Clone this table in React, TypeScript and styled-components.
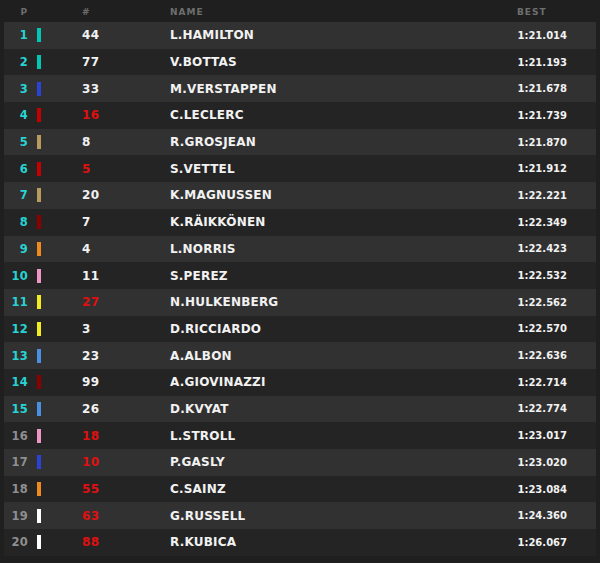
import React from 'react';
import styled, { createGlobalStyle } from 'styled-components';

const GlobalStyle = createGlobalStyle`
  html, body {
    margin: 0;
    padding: 0;
    background: #1f1f1f;
  }
  body {
    font-family: 'DejaVu Sans', 'Liberation Sans', sans-serif;
    -webkit-font-smoothing: antialiased;
  }
`;

const teamColors: Record<string, string> = {
  mercedes: '#00c8b4',
  redbull: '#2a42d8',
  ferrari: '#c40000',
  haas: '#b99a5e',
  alfa: '#8c0000',
  mclaren: '#f08a1c',
  racingpoint: '#f096c6',
  renault: '#f5ec20',
  tororosso: '#4a90e2',
  williams: '#ffffff',
};

type Driver = {
  num: number;
  name: string;
  best: string;
  team: string;
  redNum?: boolean;
};

const drivers: Driver[] = [
  { num: 44, name: 'L.HAMILTON', best: '1:21.014', team: 'mercedes' },
  { num: 77, name: 'V.BOTTAS', best: '1:21.193', team: 'mercedes' },
  { num: 33, name: 'M.VERSTAPPEN', best: '1:21.678', team: 'redbull' },
  { num: 16, name: 'C.LECLERC', best: '1:21.739', team: 'ferrari', redNum: true },
  { num: 8, name: 'R.GROSJEAN', best: '1:21.870', team: 'haas' },
  { num: 5, name: 'S.VETTEL', best: '1:21.912', team: 'ferrari', redNum: true },
  { num: 20, name: 'K.MAGNUSSEN', best: '1:22.221', team: 'haas' },
  { num: 7, name: 'K.RÄIKKÖNEN', best: '1:22.349', team: 'alfa' },
  { num: 4, name: 'L.NORRIS', best: '1:22.423', team: 'mclaren' },
  { num: 11, name: 'S.PEREZ', best: '1:22.532', team: 'racingpoint' },
  { num: 27, name: 'N.HULKENBERG', best: '1:22.562', team: 'renault', redNum: true },
  { num: 3, name: 'D.RICCIARDO', best: '1:22.570', team: 'renault' },
  { num: 23, name: 'A.ALBON', best: '1:22.636', team: 'tororosso' },
  { num: 99, name: 'A.GIOVINAZZI', best: '1:22.714', team: 'alfa' },
  { num: 26, name: 'D.KVYAT', best: '1:22.774', team: 'tororosso' },
  { num: 18, name: 'L.STROLL', best: '1:23.017', team: 'racingpoint', redNum: true },
  { num: 10, name: 'P.GASLY', best: '1:23.020', team: 'redbull', redNum: true },
  { num: 55, name: 'C.SAINZ', best: '1:23.084', team: 'mclaren', redNum: true },
  { num: 63, name: 'G.RUSSELL', best: '1:24.360', team: 'williams', redNum: true },
  { num: 88, name: 'R.KUBICA', best: '1:26.067', team: 'williams', redNum: true },
];

const Board = styled.div`
  width: 600px;
  height: 563px;
  background: #1f1f1f;
  padding: 0 4px;
  box-sizing: border-box;
  overflow: hidden;
`;

const cols = `
  display: grid;
  grid-template-columns: 24px 9px 4px 41px 88px 1fr 50px 29px;
  grid-template-rows: 100%;
  align-items: center;
`;

const HeaderRow = styled.div`
  ${cols}
  height: 22px;
  color: #6e6e6e;
  font-size: 9px;
  font-weight: bold;
  letter-spacing: 1px;
`;

const HeaderCell = styled.span<{ $col: number; $right?: boolean }>`
  grid-column: ${(p) => p.$col};
  grid-row: 1;
  text-align: ${(p) => (p.$right ? 'right' : 'left')};
  white-space: nowrap;
  padding-top: 1px;
`;

const Row = styled.div<{ $odd: boolean }>`
  ${cols}
  height: 26.7px;
  background: ${(p) => (p.$odd ? '#313131' : '#242424')};
`;

const Pos = styled.span<{ $top: boolean }>`
  grid-column: 1;
  grid-row: 1;
  text-align: right;
  font-size: 11.5px;
  font-weight: bold;
  letter-spacing: 0.3px;
  color: ${(p) => (p.$top ? '#27d3d3' : '#8f8f8f')};
`;

const TeamBar = styled.span<{ $color: string }>`
  grid-column: 3;
  grid-row: 1;
  width: 4px;
  height: 14px;
  background: ${(p) => p.$color};
`;

const CarNum = styled.span<{ $red?: boolean }>`
  grid-column: 5;
  grid-row: 1;
  font-size: 12px;
  font-weight: bold;
  letter-spacing: 0.5px;
  color: ${(p) => (p.$red ? '#e01010' : '#f2f2f2')};
`;

const Name = styled.span`
  grid-column: 6;
  grid-row: 1;
  font-size: 12px;
  font-weight: bold;
  letter-spacing: 0.2px;
  color: #f2f2f2;
  white-space: nowrap;
`;

const Best = styled.span`
  grid-column: 7;
  grid-row: 1;
  justify-self: end;
  font-size: 10px;
  font-weight: bold;
  color: #f2f2f2;
  white-space: nowrap;
`;

const App: React.FC = () => (
  <>
    <GlobalStyle />
    <Board>
      <HeaderRow>
        <HeaderCell $col={1} $right>P</HeaderCell>
        <HeaderCell $col={5}>#</HeaderCell>
        <HeaderCell $col={6}>NAME</HeaderCell>
        <HeaderCell $col={7}>BEST</HeaderCell>
      </HeaderRow>
      {drivers.map((d, i) => (
        <Row key={d.num} $odd={i % 2 === 0}>
          <Pos $top={i < 15}>{i + 1}</Pos>
          <TeamBar $color={teamColors[d.team]} />
          <CarNum $red={d.redNum}>{d.num}</CarNum>
          <Name>{d.name}</Name>
          <Best>{d.best}</Best>
        </Row>
      ))}
    </Board>
  </>
);

export default App;
